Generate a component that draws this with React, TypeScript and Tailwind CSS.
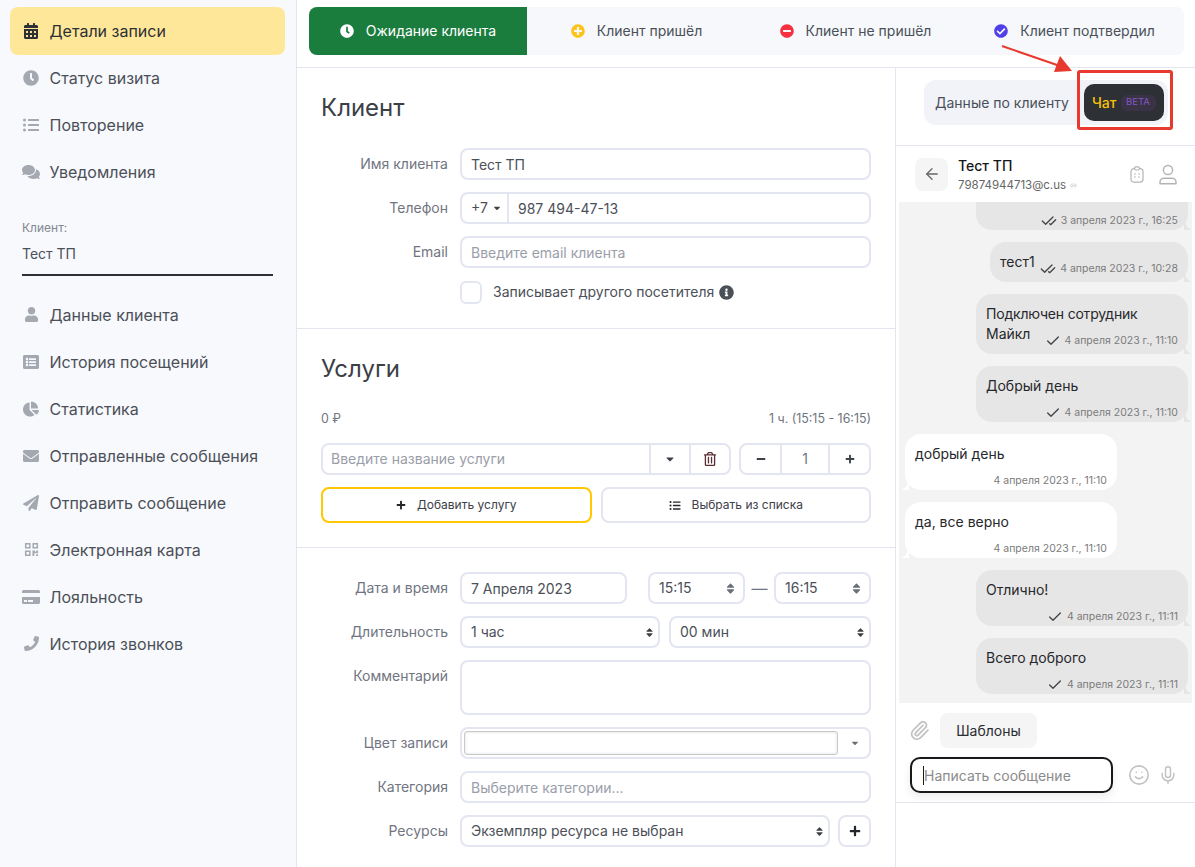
import type { ReactNode } from "react";
import {
  FaCalendarAlt,
  FaClock,
  FaListUl,
  FaComments,
  FaUser,
  FaListAlt,
  FaChartPie,
  FaEnvelope,
  FaPaperPlane,
  FaCreditCard,
  FaPhone,
  FaPlusCircle,
  FaMinusCircle,
  FaCheckCircle,
  FaInfoCircle,
  FaCaretDown,
  FaSort,
  FaPlus,
  FaMinus,
  FaRegTrashAlt,
} from "react-icons/fa";
import { ArrowLeft, Check, CheckCheck, Link2, Mic, Paperclip, Smile } from "lucide-react";

function QrIcon({ className }: { className?: string }) {
  return (
    <svg viewBox="0 0 16 16" className={className} fill="currentColor">
      <path d="M1 1h6v6H1zM2.6 2.6v2.8h2.8V2.6zM9 1h6v6H9zM10.6 2.6v2.8h2.8V2.6zM1 9h6v6H1zM2.6 10.6v2.8h2.8v-2.8zM9 9h3v2h1V9h2v3h-4v3H9zM13 13h2v2h-2z" />
    </svg>
  );
}

function NoteIcon({ className }: { className?: string }) {
  return (
    <svg viewBox="0 0 14 17" className={className} fill="none" stroke="currentColor" strokeWidth="1.2">
      <rect x="1" y="2.6" width="12" height="13.6" rx="3" />
      <rect x="4.6" y="0.8" width="4.8" height="3.2" rx="1.2" fill="white" />
      <path d="M4.4 8h1.2M8.4 8h1.2M4.4 11h1.2M8.4 11h1.2" strokeWidth="1.4" />
    </svg>
  );
}

function PersonIcon({ className }: { className?: string }) {
  return (
    <svg viewBox="0 0 18 21" className={className} fill="none" stroke="currentColor" strokeWidth="1.5">
      <circle cx="9" cy="6" r="4.6" />
      <path d="M1 19.8v-1.6c0-2.2 1.8-4 4-4h8c2.2 0 4 1.8 4 4v1.6z" strokeLinejoin="round" />
    </svg>
  );
}

const topNav = [
  { icon: <FaClock className="h-4 w-4" />, label: "Статус визита" },
  { icon: <FaListUl className="h-4 w-4" />, label: "Повторение" },
  { icon: <FaComments className="h-[18px] w-[18px]" />, label: "Уведомления" },
];

const bottomNav = [
  { icon: <FaUser className="h-[15px] w-[15px]" />, label: "Данные клиента" },
  { icon: <FaListAlt className="h-4 w-4" />, label: "История посещений" },
  { icon: <FaChartPie className="h-4 w-4" />, label: "Статистика" },
  { icon: <FaEnvelope className="h-4 w-4" />, label: "Отправленные сообщения" },
  { icon: <FaPaperPlane className="h-4 w-4" />, label: "Отправить сообщение" },
  { icon: <QrIcon className="h-[15px] w-[15px]" />, label: "Электронная карта" },
  { icon: <FaCreditCard className="h-[18px] w-[18px]" />, label: "Лояльность" },
  { icon: <FaPhone className="h-[15px] w-[15px]" />, label: "История звонков" },
];

function NavItem({ icon, label }: { icon: ReactNode; label: string }) {
  return (
    <div className="flex h-[47px] items-center gap-[9.5px] px-3 pb-[2px] text-base text-[#4b5058]">
      <span className="flex w-[18px] justify-center text-[#a4a8b1]">{icon}</span>
      {label}
    </div>
  );
}

function Sidebar() {
  return (
    <aside className="w-[297px] shrink-0 border-r border-[#e4e6ef] bg-[#f8f9fd] pl-[10px] pr-[11px] pt-[7px]">
      <div className="flex h-[48px] items-center gap-[9.5px] rounded-lg bg-[#ffe799] px-3 text-base text-[#2d3035]">
        <span className="flex w-[18px] justify-center">
          <FaCalendarAlt className="h-4 w-4" />
        </span>
        Детали записи
      </div>
      {topNav.map((item) => (
        <NavItem key={item.label} {...item} />
      ))}
      <div className="mx-3 mt-6 w-[251px] border-b-2 border-[#2d3035] pb-[10px]">
        <div className="h-4 text-xs leading-4 text-[#83878f]">Клиент:</div>
        <div className="mt-2 h-5 text-sm leading-5 text-[#4b5058]">Тест ТП</div>
      </div>
      <div className="mt-4">
        {bottomNav.map((item) => (
          <NavItem key={item.label} {...item} />
        ))}
      </div>
    </aside>
  );
}

const tabs = [
  { icon: <FaPlusCircle className="h-[14px] w-[14px] text-[#fdc31d]" />, label: "Клиент пришёл" },
  { icon: <FaMinusCircle className="h-[14px] w-[14px] text-[#f5303f]" />, label: "Клиент не пришёл" },
  { icon: <FaCheckCircle className="h-[14px] w-[14px] text-[#4f3fe8]" />, label: "Клиент подтвердил" },
];

function StatusTabs() {
  return (
    <div className="h-[68px] border-b border-[#e4e6ef] pl-3 pr-[11px] pt-[7px]">
      <div className="flex h-12 rounded-lg bg-[#f6f8fc] text-sm">
        <div className="flex w-[218px] items-center justify-center gap-[12px] rounded-l-lg bg-[#1a7d3e] text-white">
          <FaClock className="h-[14px] w-[14px]" />
          Ожидание клиента
        </div>
        {tabs.map((tab) => (
          <div key={tab.label} className="flex flex-1 items-center justify-center gap-[12px] text-[#4b5058]">
            {tab.icon}
            {tab.label}
          </div>
        ))}
      </div>
    </div>
  );
}

function Row({ label, children, top }: { label: string; children: ReactNode; top?: boolean }) {
  return (
    <div className={`flex gap-3 ${top ? "items-start" : "items-center"}`}>
      <div className={`w-[126px] shrink-0 text-right text-sm text-[#71757f] ${top ? "pt-[6px]" : ""}`}>{label}</div>
      <div className="flex min-w-0 flex-1 gap-[9px]">{children}</div>
    </div>
  );
}

function Field({ value, placeholder, className = "w-full" }: { value?: string; placeholder?: string; className?: string }) {
  return (
    <input
      readOnly
      value={value}
      placeholder={placeholder}
      className={`h-8 rounded-lg border-2 border-[#e3e6f0] bg-white px-[9px] text-sm text-[#4b5058] outline-none placeholder:text-[#9a9ea9] ${className}`}
    />
  );
}

function SelectBox({ value, className, sort = "sm" }: { value: string; className: string; sort?: "sm" | "lg" }) {
  return (
    <div className={`flex h-8 items-center justify-between rounded-lg border-2 border-[#e3e6f0] bg-white pl-[9px] pr-[3px] text-sm text-[#4b5058] ${className}`}>
      {value}
      <FaSort className={sort === "lg" ? "mr-[3px] h-[13px] w-[13px] text-[#6a6e77]" : "h-[11px] w-[11px] text-[#3c4047]"} />
    </div>
  );
}

function ClientSection() {
  return (
    <section className="border-b border-[#e4e6ef] pb-[25px] pl-[25px] pr-6 pt-6">
      <h2 className="-ml-px h-8 text-2xl leading-8 text-[#3b3f46]">Клиент</h2>
      <div className="mt-6 flex flex-col gap-3">
        <Row label="Имя клиента">
          <Field value="Тест ТП" />
        </Row>
        <Row label="Телефон">
          <div className="flex h-8 w-full items-center rounded-lg border-2 border-[#e3e6f0] text-sm text-[#4b5058]">
            <span className="flex h-full w-[47px] items-center gap-1 border-r-2 border-[#e3e6f0] pl-[9px]">
              +7 <FaCaretDown className="h-[10px] w-[10px] text-[#3c4047]" />
            </span>
            <span className="pl-[9px] pt-px">987 494-47-13</span>
          </div>
        </Row>
        <Row label="Email">
          <Field placeholder="Введите email клиента" />
        </Row>
      </div>
      <div className="ml-[138px] mt-[13px] flex h-[22px] items-center gap-[11px] text-sm text-[#4b5058]">
        <span className="h-[23px] w-[22px] rounded-md border-2 border-[#e3e6f0] bg-white" />
        Записывает другого посетителя
        <FaInfoCircle className="-ml-[6px] h-[15px] w-[15px] text-[#4b5058]" />
      </div>
    </section>
  );
}

function ServicesSection() {
  return (
    <section className="border-b border-[#e4e6ef] pb-6 pl-6 pr-6 pt-6">
      <h2 className="h-8 text-2xl leading-8 text-[#3b3f46]">Услуги</h2>
      <div className="mt-[26px] flex h-4 items-center justify-between text-[12.4px] text-[#71757f]">
        <span>0 ₽</span>
        <span>1 ч. (15:15 - 16:15)</span>
      </div>
      <div className="mt-4 flex gap-2">
        <div className="flex h-8 w-[410px] rounded-lg border-2 border-[#e3e6f0] text-[#3c4047]">
          <span className="flex flex-1 items-center pl-2 text-sm text-[#9a9ea9]">Введите название услуги</span>
          <span className="flex w-10 items-center justify-center border-l-2 border-[#e3e6f0]">
            <FaCaretDown className="h-3 w-3" />
          </span>
          <span className="flex w-[40px] items-center justify-center border-l-2 border-[#e3e6f0] text-[#5a2f35]">
            <FaRegTrashAlt className="h-[14px] w-[14px]" />
          </span>
        </div>
        <div className="flex h-8 flex-1 rounded-lg border-2 border-[#e3e6f0] text-[#3c4047]">
          <span className="flex w-[39px] items-center justify-center">
            <FaMinus className="h-[10px] w-[10px]" />
          </span>
          <span className="flex w-[50px] items-center justify-center border-x-2 border-[#e3e6f0] text-sm text-[#71757f]">1</span>
          <span className="flex flex-1 items-center justify-center">
            <FaPlus className="h-[10px] w-[10px]" />
          </span>
        </div>
      </div>
      <div className="mt-3 flex gap-[9px]">
        <div className="flex h-9 flex-1 items-center justify-center gap-[11px] rounded-lg border-2 border-[#ffc800] text-xs text-[#3c4047]">
          <FaPlus className="h-[10px] w-[10px] text-[#23262b]" />
          Добавить услугу
        </div>
        <div className="flex h-9 flex-1 items-center justify-center gap-[11px] rounded-lg border-2 border-[#e3e6f0] text-xs text-[#3c4047]">
          <FaListUl className="h-[11px] w-[12px] text-[#23262b]" />
          Выбрать из списка
        </div>
      </div>
    </section>
  );
}

function DetailsSection() {
  return (
    <section className="flex flex-col gap-3 pl-[25px] pr-6 pt-6">
      <Row label="Дата и время">
        <Field value="7 Апреля 2023" className="w-[167px] shrink-0" />
        <SelectBox value="15:15" className="ml-3 w-[97px]" sort="lg" />
        <span className="flex w-[11px] items-center justify-center text-[#71757f]">—</span>
        <SelectBox value="16:15" className="w-[97px]" sort="lg" />
      </Row>
      <Row label="Длительность">
        <SelectBox value="1 час" className="w-[200px]" />
        <SelectBox value="00 мин" className="flex-1" />
      </Row>
      <Row label="Комментарий" top>
        <div className="h-[55px] w-full rounded-lg border-2 border-[#e3e6f0]" />
      </Row>
      <Row label="Цвет записи">
        <div className="flex h-8 w-full items-center justify-between rounded-lg border-2 border-[#e3e6f0] pl-[2px] pr-[9px]">
          <span className="h-6 w-[374px] rounded-[3px] border border-[#c9c9c9] bg-white shadow-[inset_0_0_3px_rgba(0,0,0,0.15)]" />
          <FaCaretDown className="h-[10px] w-[10px] text-[#6a6e77]" />
        </div>
      </Row>
      <Row label="Категория">
        <Field placeholder="Выберите категории..." />
      </Row>
      <Row label="Ресурсы">
        <SelectBox value="Экземпляр ресурса не выбран" className="w-[370px]" />
        <div className="-ml-px flex h-8 flex-1 items-center justify-center rounded-lg border-2 border-[#e3e6f0]">
          <FaPlus className="h-3 w-3 text-[#23262b]" />
        </div>
      </Row>
    </section>
  );
}

type Message = {
  id: number;
  out: boolean;
  lines: string[];
  time: string;
  read?: boolean;
  inline?: boolean;
  width: string;
};

const messages: Message[] = [
  { id: 1, out: true, lines: [""], time: "3 апреля 2023 г., 16:25", read: true, width: "w-[212px]" },
  { id: 2, out: true, lines: ["тест1"], time: "4 апреля 2023 г., 10:28", read: true, inline: true, width: "w-[198px]" },
  { id: 3, out: true, lines: ["Подключен сотрудник", "Майкл"], time: "4 апреля 2023 г., 11:10", inline: true, width: "w-[212px]" },
  { id: 4, out: true, lines: ["Добрый день"], time: "4 апреля 2023 г., 11:10", width: "w-[212px]" },
  { id: 5, out: false, lines: ["добрый день"], time: "4 апреля 2023 г., 11:10", width: "w-[212px]" },
  { id: 6, out: false, lines: ["да, все верно"], time: "4 апреля 2023 г., 11:10", width: "w-[212px]" },
  { id: 7, out: true, lines: ["Отлично!"], time: "4 апреля 2023 г., 11:11", width: "w-[212px]" },
  { id: 8, out: true, lines: ["Всего доброго"], time: "4 апреля 2023 г., 11:11", width: "w-[212px]" },
];

function Stamp({ msg }: { msg: Message }) {
  return (
    <span className="flex h-4 translate-y-px items-center justify-end gap-[4px] whitespace-nowrap text-[10.5px] text-[#7b7b7b]">
      {msg.out &&
        (msg.read ? (
          <CheckCheck className="h-4 w-4 text-[#444]" strokeWidth={2} />
        ) : (
          <Check className="h-4 w-4 text-[#444]" strokeWidth={2} />
        ))}
      {msg.time}
    </span>
  );
}

function Bubble({ msg }: { msg: Message }) {
  const last = msg.lines[msg.lines.length - 1];
  return (
    <div
      className={`relative shrink-0 rounded-2xl px-[10px] pt-[10px] text-sm leading-5 text-[#26282c] ${msg.width} ${
        msg.out ? "mr-1 self-end bg-[#e6e6e6]" : "ml-[6px] self-start bg-white"
      } ${msg.inline ? "pb-[6px]" : "pb-[2px]"}`}
    >
      {msg.inline ? (
        <>
          {msg.lines.slice(0, -1).map((line) => (
            <div key={line} className="tracking-[-0.2px]">{line}</div>
          ))}
          <div className="flex justify-between">
            <span>{last}</span>
            <span className="mt-2">
              <Stamp msg={msg} />
            </span>
          </div>
        </>
      ) : (
        <>
          <div className="h-5">{last}</div>
          <div className="mt-2">
            <Stamp msg={msg} />
          </div>
        </>
      )}
      <svg viewBox="0 0 8 12" className={`absolute bottom-0 h-3 w-2 ${msg.out ? "-right-1 text-[#e6e6e6]" : "-left-1 -scale-x-100 text-white"}`} fill="currentColor">
        <path d="M0 0C1 6 3 10 8 12L0 12Z" />
      </svg>
    </div>
  );
}

function ChatPanel() {
  return (
    <aside className="min-w-0 flex-1 bg-white">
      <div className="h-[78px] border-b border-[#e4e6ef] pl-[28px] pt-3">
        <div className="flex h-[45px] w-[244px] rounded-xl bg-[#f1f3f8] pl-[11px] pr-1 pt-1">
          <span className="flex h-[37px] flex-1 items-center text-sm text-[#4b5058]">Данные по клиенту</span>
          <span className="flex h-[37px] w-20 items-center gap-1 rounded-[10px] bg-[#2d3035] pl-2">
            <span className="text-sm font-medium text-[#f9c00c]">Чат</span>
            <span className="flex h-4 w-[35px] items-center justify-center rounded-md bg-[#3a3245] text-[9.5px] text-[#8357c4]">BETA</span>
          </span>
        </div>
      </div>
      <div className="flex h-[56px] items-center pl-[19px] pr-[18px]">
        <span className="flex h-[33px] w-[33px] items-center justify-center rounded-lg bg-[#f5f5f5]">
          <ArrowLeft className="h-[18px] w-[18px] text-[#666]" strokeWidth={1.75} />
        </span>
        <div className="ml-[10px] flex-1">
          <div className="text-sm font-medium leading-5 text-[#15171a]">Тест ТП</div>
          <div className="flex translate-y-px items-center gap-1 text-[11.5px] leading-4 text-[#666]">
            79874944713@c.us
            <Link2 className="h-[7px] w-[7px] text-[#bbb]" />
          </div>
        </div>
        <NoteIcon className="h-[17px] w-[14px] text-[#b5b5b5]" />
        <PersonIcon className="ml-[15px] h-[21px] w-[18px] text-[#b5b5b5]" />
      </div>
      <div className="mx-[3px] flex h-[501px] flex-col justify-end gap-3 overflow-hidden bg-[#f3f3f3] pb-[9px]">
        {messages.map((msg) => (
          <Bubble key={msg.id} msg={msg} />
        ))}
      </div>
      <div className="border-b border-[#e4e6ef] pb-[9px] pl-[14px] pt-[10px]">
        <div className="flex h-[35px] items-center">
          <Paperclip className="-ml-px h-[21px] w-[21px] text-[#c2c2c2]" strokeWidth={2} />
          <span className="ml-[10px] flex h-[35px] w-[97px] items-center justify-center rounded-lg bg-[#f5f5f5] text-sm text-[#2b2d31]">Шаблоны</span>
        </div>
        <div className="mt-[9px] flex items-center">
          <div className="flex h-9 w-[203px] items-center rounded-[10px] border-2 border-[#17191c] pl-[11px] text-sm text-[#8b8b8b] shadow-[0_4px_10px_rgba(0,0,0,0.08)]">
            <span className="h-[19px] w-px bg-[#17191c]" />
            <span className="pt-px">Написать сообщение</span>
          </div>
          <Smile className="ml-[15px] h-[22px] w-[22px] text-[#c2c2c2]" strokeWidth={1.75} />
          <Mic className="ml-2 h-[20px] w-[20px] text-[#c2c2c2]" strokeWidth={1.75} />
        </div>
      </div>
    </aside>
  );
}

export default function App() {
  return (
    <div className="relative flex h-screen w-full overflow-hidden bg-white font-['Inter',sans-serif]">
      <Sidebar />
      <div className="flex min-w-0 flex-1 flex-col">
        <StatusTabs />
        <div className="flex min-h-0 flex-1">
          <main className="w-[599px] shrink-0 border-r border-[#e4e6ef]">
            <ClientSection />
            <ServicesSection />
            <DetailsSection />
          </main>
          <ChatPanel />
        </div>
      </div>
      <svg className="pointer-events-none absolute left-[1000px] top-[44px] h-[32px] w-[76px]" viewBox="0 0 76 32" fill="none">
        <path d="M2 2L60 22" stroke="#e8392e" strokeWidth="2" />
        <path d="M72 27L54 28L60 12Z" fill="#e8392e" />
      </svg>
      <div className="pointer-events-none absolute left-[1077px] top-[70px] h-[60px] w-[96px] rounded-[3px] border-[3px] border-[#e8392e]" />
    </div>
  );
}
